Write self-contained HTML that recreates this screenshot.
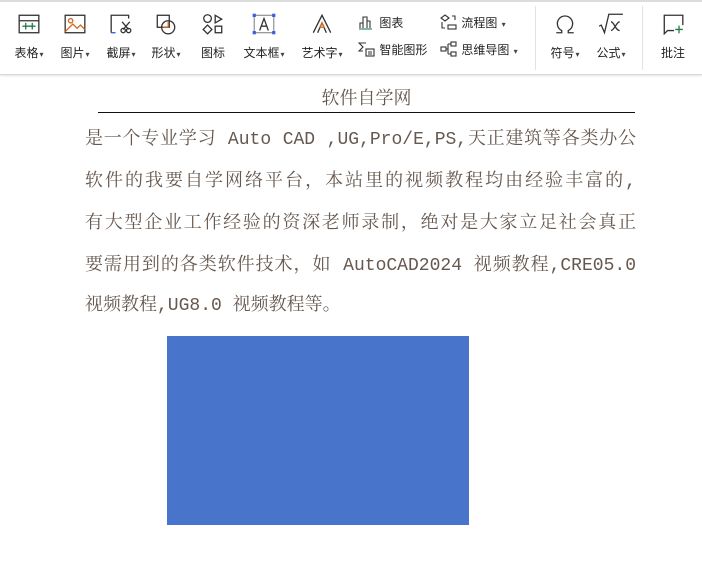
<!DOCTYPE html>
<html><head><meta charset="utf-8"><style>
body{margin:0;width:702px;height:578px;background:#fff;position:relative;overflow:hidden;font-family:"Liberation Sans","Noto Sans CJK SC",sans-serif}
.tb{position:absolute;left:0;top:0;width:702px;height:74px;border-bottom:1px solid #d8d8d8;box-shadow:0 1px 2px #e4e4e4;background:#fff}
.top{position:absolute;left:0;top:0;width:702px;height:2px;background:#dcdcdc}
.it{position:absolute;top:13px;text-align:center;font-size:12px;color:#222}
.it svg{display:block;margin:0 auto}
.it .l{margin-top:9px;white-space:nowrap}
.ar{font-size:8px;color:#444;margin-left:1px}
.sm{position:absolute;font-size:12px;color:#222;white-space:nowrap}
.sep{position:absolute;top:6px;width:1px;height:64px;background:#e2e2e2}
.doc{position:absolute;color:#66584f;font-family:"Liberation Mono","Noto Serif CJK SC",serif;font-size:18px}
.ln{position:absolute;left:85px;width:551px;white-space:nowrap;text-align:justify;text-align-last:justify}
</style></head><body>
<div class="tb"><div class="top"></div>
<div class="it" style="left:11px;width:36px"><svg width="24" height="22" viewBox="0 0 22 20" fill="none" stroke="#333" stroke-width="1.2"><rect x="2" y="2" width="18" height="16"/><line x1="2" y1="7" x2="20" y2="7"/><path d="M5 12h12M8 9v6M14 9v6" stroke="#1e7d4a"/></svg><div class="l">表格<span class="ar">▾</span></div></div>
<div class="it" style="left:57px;width:36px"><svg width="24" height="22" viewBox="0 0 22 20" fill="none" stroke="#333" stroke-width="1.2"><rect x="2" y="2" width="18" height="16"/><circle cx="7" cy="7" r="2" stroke="#d2691e"/><path d="M2 17l7-7 4 4 3-3 4 4" stroke="#d2691e"/></svg><div class="l">图片<span class="ar">▾</span></div></div>
<div class="it" style="left:103px;width:36px"><svg width="24" height="22" viewBox="0 0 22 20" fill="none" stroke="#333" stroke-width="1.2"><path d="M2 18V2h16v3" /><path d="M2 18h4" stroke="#3355dd"/><circle cx="13" cy="16" r="2"/><circle cx="18" cy="16" r="2"/><path d="M12 8l6 7M19 8l-6 7"/></svg><div class="l">截屏<span class="ar">▾</span></div></div>
<div class="it" style="left:148px;width:36px"><svg width="24" height="22" viewBox="0 0 22 20" fill="none" stroke="#333" stroke-width="1.2"><rect x="3" y="2" width="11" height="11"/><circle cx="13" cy="13" r="6"/><path d="M8 13h5V8" stroke="#d2691e"/></svg><div class="l">形状<span class="ar">▾</span></div></div>
<div class="it" style="left:196px;width:34px"><svg width="24" height="22" viewBox="0 0 22 20" fill="none" stroke="#333" stroke-width="1.2"><circle cx="6" cy="5" r="3.5"/><path d="M13 2l6 3.5-6 3.5z"/><path d="M6 11l4 4-4 4-4-4z"/><rect x="13" y="12" width="6" height="6"/></svg><div class="l">图标</div></div>
<div class="it" style="left:240px;width:48px"><svg width="26" height="22" viewBox="0 0 24 20" fill="none" stroke="#333" stroke-width="1.2"><rect x="3" y="2" width="18" height="16" stroke="#999"/><path d="M8 16l4-11 4 11M9.5 12h5"/><g fill="#3a5fe0" stroke="none"><rect x="1.5" y="0.5" width="3" height="3"/><rect x="19.5" y="0.5" width="3" height="3"/><rect x="1.5" y="16.5" width="3" height="3"/><rect x="19.5" y="16.5" width="3" height="3"/></g></svg><div class="l">文本框<span class="ar">▾</span></div></div>
<div class="it" style="left:298px;width:48px"><svg width="24" height="22" viewBox="0 0 22 20" fill="none" stroke="#333" stroke-width="1.2"><path d="M3 18L11 2l8 16M7 18l4-9 4 9"/><path d="M9 13h4l-2-4z" stroke="#d2691e"/></svg><div class="l">艺术字<span class="ar">▾</span></div></div>
<div class="sm" style="left:358px;top:14px"><svg width="18" height="16" viewBox="0 0 18 16" fill="none" stroke="#333" stroke-width="1.1" style="vertical-align:-3px"><path d="M2 14V9h3v5M5 14V3h4v11M9 14V7h3v7"/><path d="M1 15h13" stroke="#1e7d4a"/></svg> 图表</div>
<div class="sm" style="left:358px;top:41px"><svg width="18" height="16" viewBox="0 0 18 16" fill="none" stroke="#333" stroke-width="1.1" style="vertical-align:-3px"><path d="M8 2H1l4 4-4 4h4"/><rect x="8" y="8" width="8" height="7"/><path d="M10 11h4M10 13h4"/></svg> 智能图形</div>
<div class="sm" style="left:440px;top:14px"><svg width="18" height="16" viewBox="0 0 18 16" fill="none" stroke="#333" stroke-width="1.1" style="vertical-align:-3px"><path d="M5 1l4 3-4 3-4-3z"/><path d="M2 8v6h3M12 2h3v4"/><rect x="8" y="11" width="8" height="4"/></svg> 流程图 <span class="ar">▾</span></div>
<div class="sm" style="left:440px;top:41px"><svg width="18" height="16" viewBox="0 0 18 16" fill="none" stroke="#333" stroke-width="1.1" style="vertical-align:-3px"><rect x="1" y="6" width="5" height="4"/><rect x="11" y="1" width="5" height="4"/><rect x="11" y="11" width="5" height="4"/><path d="M6 8h2M8 3v10M8 3h3M8 13h3"/></svg> 思维导图 <span class="ar">▾</span></div>
<div class="sep" style="left:535px"></div>
<div class="it" style="left:547px;width:36px"><svg width="24" height="22" viewBox="0 0 22 20" fill="none" stroke="#333" stroke-width="1.2"><path d="M3 18h5v-2a7 7 0 1 1 6 0v2h5"/></svg><div class="l">符号<span class="ar">▾</span></div></div>
<div class="it" style="left:593px;width:36px"><svg width="26" height="22" viewBox="0 0 24 20" fill="none" stroke="#333" stroke-width="1.2"><path d="M1 12l2-1 3 7 4-17h13"/><path d="M12 8c3 0 4 8 8 8M20 8c-3 0-5 8-8 8" /></svg><div class="l">公式<span class="ar">▾</span></div></div>
<div class="sep" style="left:642px"></div>
<div class="it" style="left:656px;width:34px"><svg width="24" height="22" viewBox="0 0 22 20" fill="none" stroke="#333" stroke-width="1.2"><path d="M12 16H6l-3 3V2h17v9"/><path d="M13 15h7M16.5 11.5v7" stroke="#1e7d4a"/></svg><div class="l">批注</div></div>
</div>
<div class="doc">
<div style="position:absolute;left:98px;top:84px;width:537px;text-align:center;font-size:18px">软件自学网</div>
<div style="position:absolute;left:98px;top:112px;width:537px;height:1px;background:#111"></div>
<div class="ln" style="top:124px">是一个专业学习 Auto CAD ,UG,Pro/E,PS,天正建筑等各类办公</div>
<div class="ln" style="top:166px">软件的我要自学网络平台，本站里的视频教程均由经验丰富的,</div>
<div class="ln" style="top:208px">有大型企业工作经验的资深老师录制，绝对是大家立足社会真正</div>
<div class="ln" style="top:250px">要需用到的各类软件技术，如 AutoCAD2024 视频教程,CRE05.0</div>
<div class="ln" style="top:290px;text-align:left;text-align-last:left;width:auto">视频教程,UG8.0 视频教程等。</div>
</div>
<div style="position:absolute;left:167px;top:336px;width:302px;height:189px;background:#4874cb"></div>
</body></html>
